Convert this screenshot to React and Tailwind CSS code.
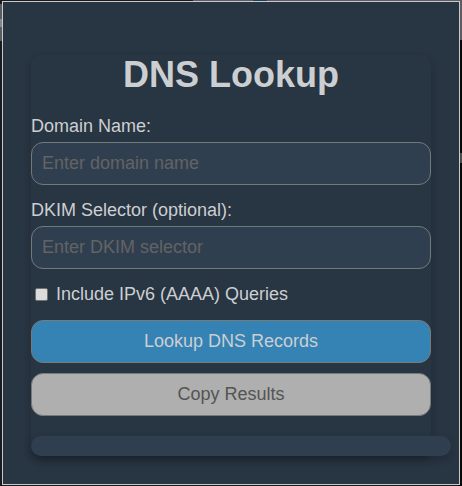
function Field({ id, label, placeholder }) {
  return (
    <div className="mb-[15px]">
      <label htmlFor={id} className="mb-1.5 block">{label}</label>
      <input
        id={id}
        type="text"
        placeholder={placeholder}
        className="block h-[43px] w-full rounded-xl border border-[#6f7b7b] bg-[#303f50] px-2.5 text-[18px] placeholder:text-[#636363] focus:outline-none"
      />
    </div>
  );
}

function Backdrop() {
  return (
    <div aria-hidden="true" className="absolute inset-0 -z-10 overflow-hidden bg-[#1b1b1d]">
      <div className="absolute top-1 left-0 h-[37px] w-1 bg-[#5c5c5c]" />
      <div className="absolute top-[19px] left-0 h-2 w-1 bg-[#85888a]" />
      <div className="absolute top-0 right-0 h-10 w-[269px] bg-[#5f5b60]" />
      <div className="absolute top-0 left-[253px] h-1 w-3.5 bg-[#1c3f57]" />
      <div className="absolute top-10 right-0 bottom-0 w-1 bg-[#080909]" />
      <div className="absolute top-[153px] right-0 h-2.5 w-1 bg-[#4c4c4c]" />
    </div>
  );
}

export default function App() {
  return (
    <div className="relative isolate px-0.5 py-px font-['Liberation_Sans',Arial,sans-serif] text-[18px] leading-5 text-[#cccfd1]">
      <Backdrop />
      <main className="border border-[#c9c9cc] bg-[#283542] px-7 pt-[53px] pb-7">
        <form
          className="rounded-[10px] shadow-[0_4px_8px_rgba(0,0,0,0.2)]"
          onSubmit={(e) => e.preventDefault()}
        >
          <h1 className="mb-[21px] text-center text-4xl font-bold">DNS Lookup</h1>
          <Field id="domain" label="Domain Name:" placeholder="Enter domain name" />
          <Field id="selector" label="DKIM Selector (optional):" placeholder="Enter DKIM selector" />
          <div className="mb-4 flex items-center gap-2 pl-1">
            <input
              id="ipv6"
              type="checkbox"
              className="size-[13px] appearance-none rounded-[2px] border border-[#737373] bg-[#dcdcdc] checked:bg-[#3582b5]"
            />
            <label htmlFor="ipv6">Include IPv6 (AAAA) Queries</label>
          </div>
          <div className="flex flex-col gap-2.5">
            <button type="submit" className="h-[43px] rounded-xl border border-[#797b78] bg-[#3582b5] pb-0.5">
              Lookup DNS Records
            </button>
            <button type="button" className="h-[43px] rounded-xl border border-[#747b7b] bg-[#afafaf] pb-0.5 text-[#545454]">
              Copy Results
            </button>
          </div>
          <div className="mt-5 -mr-5 h-5 rounded-[10px] bg-[#303f50] shadow-[0_4px_8px_rgba(0,0,0,0.2)]" />
        </form>
      </main>
    </div>
  );
}
